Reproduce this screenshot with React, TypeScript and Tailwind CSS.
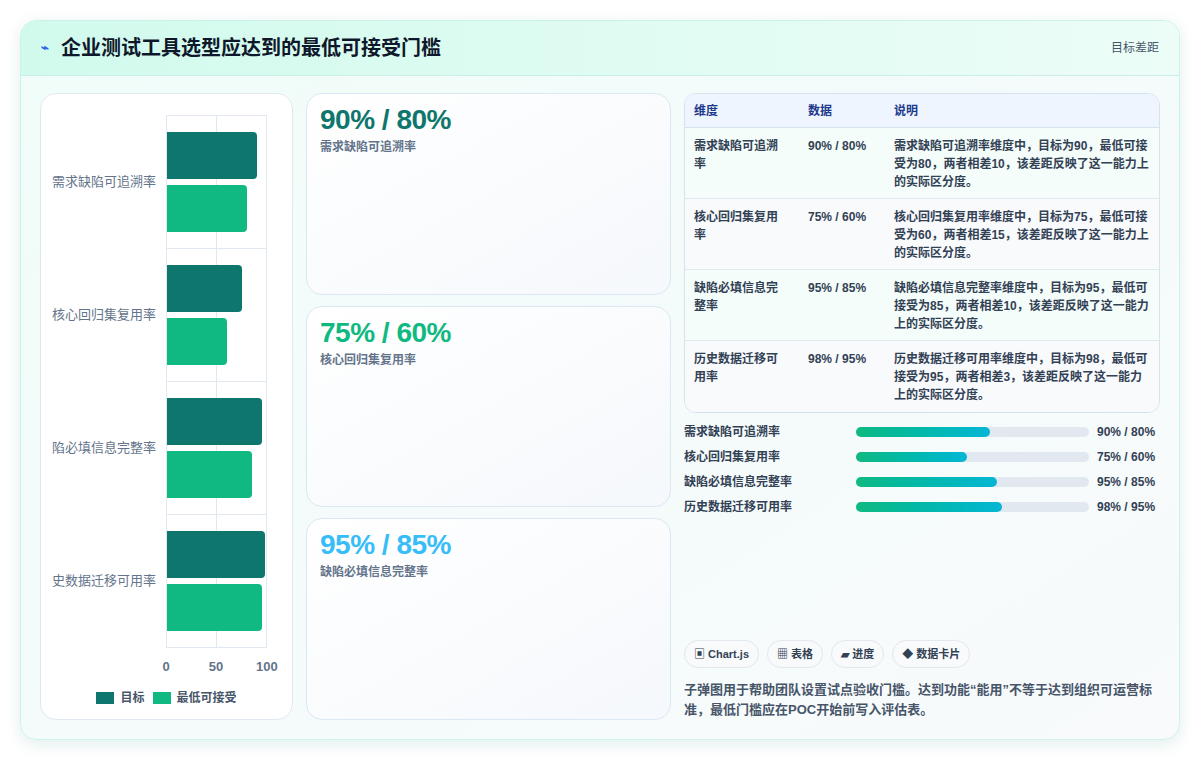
const rows = [
  { name: "需求缺陷可追溯率", clip: "需求缺陷可追溯率", t: 90, m: 80, fill: 134 },
  { name: "核心回归集复用率", clip: "核心回归集复用率", t: 75, m: 60, fill: 111 },
  { name: "缺陷必填信息完整率", clip: "陷必填信息完整率", t: 95, m: 85, fill: 141 },
  { name: "历史数据迁移可用率", clip: "史数据迁移可用率", t: 98, m: 95, fill: 146 },
];

const cards = [
  { v: "90% / 80%", n: "需求缺陷可追溯率", c: "text-[#0f766e]" },
  { v: "75% / 60%", n: "核心回归集复用率", c: "text-[#10b981]" },
  { v: "95% / 85%", n: "缺陷必填信息完整率", c: "text-[#38bdf8]" },
];

export default function App() {
  return (
    <div className="w-[1201px] h-[761px] bg-white p-[20px] font-[Liberation_Sans,Noto_Sans_CJK_SC,sans-serif]">
      <div className="w-[1160px] h-[720px] rounded-2xl border border-[#ccf3ea] shadow-[0_4px_16px_rgba(15,118,110,0.12)] bg-gradient-to-br from-[#f0fdf9] to-[#f8fafc] overflow-hidden flex flex-col">
        <div className="h-[55px] flex items-center justify-between px-5 bg-gradient-to-r from-[#d1faed] to-[#ecfdf7] border-b border-[#cdeee8]">
          <div className="flex items-center gap-3">
            <span className="text-[#2563eb] text-[13px] font-bold">⌁</span>
            <span className="text-[20px] font-bold text-[#0f172a]">企业测试工具选型应达到的最低可接受门槛</span>
          </div>
          <span className="text-[12px] text-[#475569]">目标差距</span>
        </div>
        <div className="flex-1 flex gap-[13px] px-[19px] pt-[17px] pb-[19px]">
          <div className="w-[253px] bg-white rounded-2xl border border-[#e2e8f0] flex flex-col pt-[21px]">
            <div className="flex flex-col">
              {rows.map((r, i) => (
                <div key={i} className="flex h-[133px]">
                  <div className="w-[125px] flex items-center justify-end pr-[10px] overflow-hidden">
                    <span className="text-[13px] text-[#64748b] whitespace-nowrap">{r.clip}</span>
                  </div>
                  <div className="relative w-[101px] border-l border-t border-[#e2e8f0] flex flex-col justify-center gap-[6px]">
                    <div className="absolute left-[49px] top-0 bottom-0 w-px bg-[#e2e8f0]" />
                    <div className="absolute left-[99px] top-0 bottom-0 w-px bg-[#e2e8f0]" />
                    <div className="relative h-[47px] bg-[#0f766e] rounded-r" style={{ width: r.t }} />
                    <div className="relative h-[47px] bg-[#10b981] rounded-r" style={{ width: r.m }} />
                  </div>
                </div>
              ))}
              <div className="flex"><div className="w-[125px]" /><div className="w-[101px] border-t border-[#e2e8f0]" /></div>
            </div>
            <div className="flex ml-[115px] w-[120px] justify-between text-[13px] font-bold text-[#64748b] mt-[9px]">
              <span className="w-[20px] text-center">0</span><span className="w-[20px] text-center">50</span><span className="w-[20px] text-center">100</span>
            </div>
            <div className="flex justify-center gap-2 mt-[12px] text-[12px] font-bold text-[#475569]">
              <span className="flex items-center gap-1.5"><span className="w-[18px] h-[12px] bg-[#0f766e]" />目标</span>
              <span className="flex items-center gap-1.5"><span className="w-[18px] h-[12px] bg-[#10b981]" />最低可接受</span>
            </div>
          </div>
          <div className="w-[365px] flex flex-col gap-[11px]">
            {cards.map((c, i) => (
              <div key={i} className="flex-1 rounded-2xl border border-[#dbe7f5] bg-gradient-to-br from-white to-[#f5f8fc] px-[13px] pt-[10px]">
                <div className={`text-[28px] font-bold leading-[32px] tracking-[-0.5px] ${c.c}`}>{c.v}</div>
                <div className="text-[12px] text-[#64748b] font-bold mt-[2px]">{c.n}</div>
              </div>
            ))}
          </div>
          <div className="flex-1 flex flex-col">
            <div className="rounded-xl border border-[#d5e3ef] overflow-hidden bg-white text-[12px] font-bold">
              <div className="flex h-[34px] items-center bg-[#eef5ff] text-[#1e3a8a] border-b border-[#d5e3ef]">
                <span className="w-[123px] pl-[9px]">维度</span><span className="w-[86px]">数据</span><span className="flex-1">说明</span>
              </div>
              {rows.map((r, i) => (
                <div key={i} className={`flex h-[71px] pt-[9px] leading-[18px] text-[#334155] ${i < 3 ? "border-b border-[#e2e8f0]" : ""} ${i % 2 === 0 ? "bg-[#f4fdf9]" : "bg-[#f8fafc]"}`}>
                  <span className="w-[123px] pl-[9px] pr-[22px]">{r.name}</span>
                  <span className="w-[86px]">{r.t}% / {r.m}%</span>
                  <span className="flex-1 pr-[10px]">{r.name}维度中，目标为{r.t}，最低可接受为{r.m}，两者相差{r.t - r.m}，该差距反映了这一能力上的实际区分度。</span>
                </div>
              ))}
            </div>
            <div className="flex flex-col gap-[9px] mt-[11px]">
              {rows.map((r, i) => (
                <div key={i} className="flex items-center h-[16px] text-[12px] font-bold text-[#334155]">
                  <span className="w-[172px]">{r.name}</span>
                  <div className="w-[233px] h-[10px] rounded-full bg-[#e2e8f0]">
                    <div className="h-full rounded-full bg-gradient-to-r from-[#10b981] to-[#06b6d4]" style={{ width: r.fill }} />
                  </div>
                  <span className="ml-[8px]">{r.t}% / {r.m}%</span>
                </div>
              ))}
            </div>
            <div className="mt-auto flex gap-2 text-[11px] font-bold text-[#334155]">
              {["▣ Chart.js", "▦ 表格", "▰ 进度", "◆ 数据卡片"].map((t) => (
                <span key={t} className="px-[9px] h-[28px] flex items-center rounded-full border border-[#e2e8f0] bg-[#f8fafc]">{t}</span>
              ))}
            </div>
            <p className="mt-[12px] text-[13px] leading-[20px] font-bold text-[#475569]">子弹图用于帮助团队设置试点验收门槛。达到功能“能用”不等于达到组织可运营标准，最低门槛应在POC开始前写入评估表。</p>
          </div>
        </div>
      </div>
    </div>
  );
}
